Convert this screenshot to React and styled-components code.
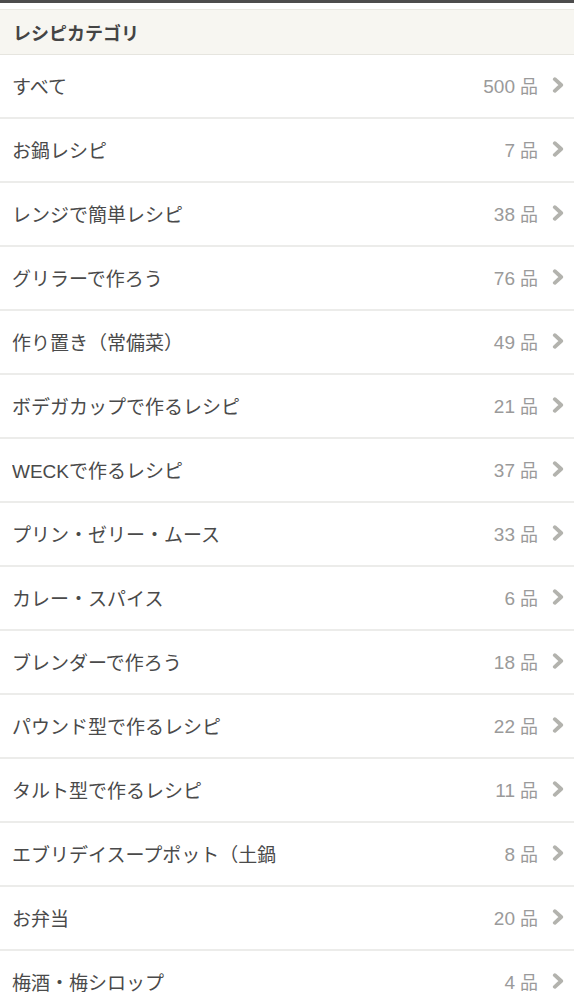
import React from "react";
import styled, { createGlobalStyle } from "styled-components";

const GlobalStyle = createGlobalStyle`
  body {
    margin: 0;
    background: #ffffff;
    font-family: "Liberation Sans", "Noto Sans CJK JP", sans-serif;
  }
`;

const Page = styled.div`
  width: 574px;
  height: 1002px;
  overflow: hidden;
  background: #ffffff;
`;

const TopBar = styled.div`
  height: 3px;
  background: #4d4d4d;
  margin-bottom: 6px;
`;

const Header = styled.div`
  height: 44px;
  display: flex;
  align-items: center;
  padding: 0 13px;
  background: #f7f6f1;
  border-top: 1px solid #ebeae4;
  border-bottom: 1px solid #e6e5df;
  font-family: "Noto Sans CJK JP", sans-serif;
  font-weight: 700;
  font-size: 18px;
  color: #444444;
`;

const List = styled.ul`
  list-style: none;
  margin: 0;
  padding: 0;
`;

const Row = styled.li`
  box-sizing: border-box;
  height: 64px;
  display: flex;
  align-items: center;
  padding: 0 10px 2px 12px;
  border-bottom: 2px solid #ececea;
`;

const Name = styled.span`
  flex: 1;
  font-family: "Liberation Sans", "Noto Sans CJK JP", sans-serif;
  font-size: 19px;
  color: #4a4a4a;
  white-space: nowrap;
  overflow: hidden;
`;

const Count = styled.span`
  font-size: 19px;
  color: #9a9a9a;
  margin-right: 14px;
  white-space: nowrap;

  small {
    font-family: "Noto Sans CJK JP", sans-serif;
    font-size: 18px;
    margin-left: 5px;
  }
`;

const Chevron = () => (
  <svg width="12" height="16" viewBox="0 0 12 16">
    <path d="M2.8 2.2 L9.2 8 L2.8 13.8" fill="none" stroke="#b3b3ae" strokeWidth="3.8" strokeLinecap="round" strokeLinejoin="round" />
  </svg>
);

const categories = [
  ["すべて", 500],
  ["お鍋レシピ", 7],
  ["レンジで簡単レシピ", 38],
  ["グリラーで作ろう", 76],
  ["作り置き（常備菜）", 49],
  ["ボデガカップで作るレシピ", 21],
  ["WECKで作るレシピ", 37],
  ["プリン・ゼリー・ムース", 33],
  ["カレー・スパイス", 6],
  ["ブレンダーで作ろう", 18],
  ["パウンド型で作るレシピ", 22],
  ["タルト型で作るレシピ", 11],
  ["エブリデイスープポット（土鍋", 8],
  ["お弁当", 20],
  ["梅酒・梅シロップ", 4],
];

export default function App() {
  return (
    <Page>
      <GlobalStyle />
      <TopBar />
      <Header>レシピカテゴリ</Header>
      <List>
        {categories.map(([name, n]) => (
          <Row key={name}>
            <Name>{name}</Name>
            <Count>
              {n}
              <small>品</small>
            </Count>
            <Chevron />
          </Row>
        ))}
      </List>
    </Page>
  );
}
